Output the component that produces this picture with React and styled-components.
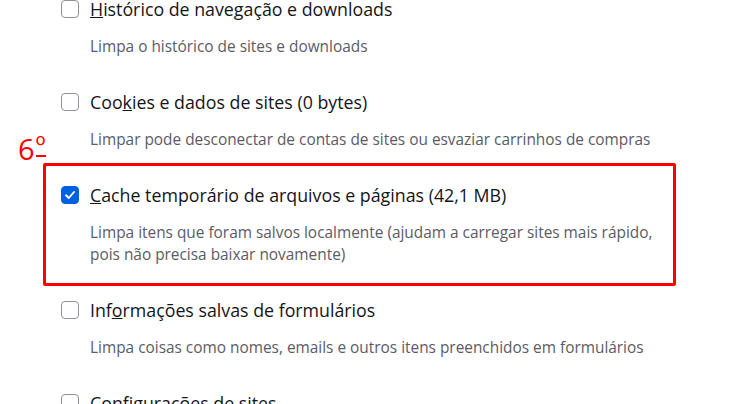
import styled, { createGlobalStyle } from "styled-components"

const GlobalStyle = createGlobalStyle`
  html, body {
    margin: 0;
    padding: 0;
    background: #ffffff;
  }
  body {
    font-family: "Open Sans", "Noto Sans", sans-serif;
    color: #15141a;
  }
`

const Page = styled.div`
  width: 746px;
  height: 404px;
  overflow: hidden;
  padding-left: 61px;
  box-sizing: border-box;
`

const List = styled.div`
  display: flex;
  flex-direction: column;
`

const Item = styled.div`
  position: relative;
  padding-bottom: 35px;
`

const Row = styled.label`
  display: flex;
  align-items: center;
  gap: 11px;
  height: 18px;
`

const Box = styled.span`
  box-sizing: border-box;
  width: 18px;
  height: 18px;
  flex: none;
  border-radius: 4px;
  border: 1px solid ${p => (p.checked ? "#0061e0" : "#8f8f9d")};
  background: ${p => (p.checked ? "#0061e0" : "#ffffff")};
  display: flex;
  align-items: center;
  justify-content: center;
`

const Title = styled.span`
  font-size: 17.8px;
  line-height: 18px;
  color: #15141a;
  white-space: nowrap;
`

const Desc = styled.p`
  margin: 18px 0 0 29px;
  font-size: 15.4px;
  line-height: 22px;
  color: #5b5b66;
  max-width: 575px;
`

const Frame = styled.div`
  position: absolute;
  left: -18px;
  top: -23px;
  width: 633px;
  height: 123px;
  box-sizing: border-box;
  border: 3px solid #ff0000;
  border-radius: 2px;
  pointer-events: none;
`

const Tag = styled.span`
  position: absolute;
  left: -43px;
  top: -54px;
  font-size: 29px;
  line-height: 34px;
  color: #ff0000;
  white-space: nowrap;
`

const Ord = styled.span`
  display: inline-block;
  font-size: 27px;
  line-height: 18px;
  margin-left: 1px;
  border-bottom: 2px solid #ff0000;
  vertical-align: 4px;
`

const Check = () => (
  <svg width="12" height="12" viewBox="0 0 12 12">
    <path d="M2 6.3 L4.8 9 L10 3" fill="none" stroke="#fff" strokeWidth="1.9" strokeLinecap="round" strokeLinejoin="round" />
  </svg>
)

const Option = ({ checked, title, desc, children }) => (
  <Item>
    {children}
    <Row>
      <Box checked={checked}>{checked && <Check />}</Box>
      <Title>{title}</Title>
    </Row>
    {desc && <Desc>{desc}</Desc>}
  </Item>
)

export default function App() {
  return (
    <>
      <GlobalStyle />
      <Page>
        <List>
          <Option
            title={<><u>H</u>istórico de navegação e downloads</>}
            desc="Limpa o histórico de sites e downloads"
          />
          <Option
            title={<>Coo<u>k</u>ies e dados de sites (0 bytes)</>}
            desc="Limpar pode desconectar de contas de sites ou esvaziar carrinhos de compras"
          />
          <Option
            checked
            title={<><u>C</u>ache temporário de arquivos e páginas (42,1 MB)</>}
            desc="Limpa itens que foram salvos localmente (ajudam a carregar sites mais rápido, pois não precisa baixar novamente)"
          >
            <Frame />
            <Tag>6<Ord>º</Ord></Tag>
          </Option>
          <Option
            title={<>Inf<u>o</u>rmações salvas de formulários</>}
            desc="Limpa coisas como nomes, emails e outros itens preenchidos em formulários"
          />
          <Option title={<>Configurações de sites</>} />
        </List>
      </Page>
    </>
  )
}
